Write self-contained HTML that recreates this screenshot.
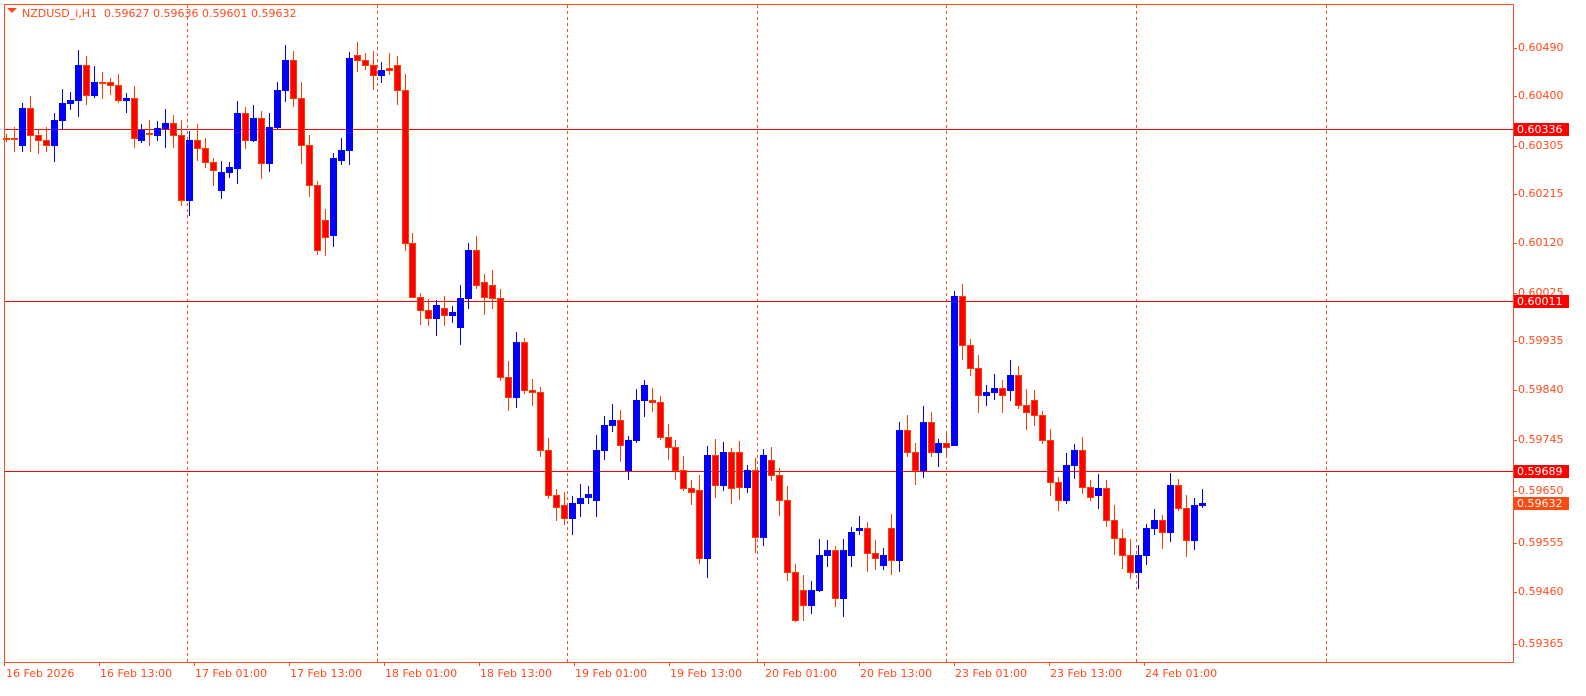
<!DOCTYPE html>
<html><head><meta charset="utf-8"><style>
body{margin:0;width:1586px;height:696px;background:#fff;overflow:hidden;position:relative;font-family:"DejaVu Sans","Liberation Sans",sans-serif;font-size:11px;color:#ff4a1c}
.t{position:absolute;white-space:nowrap}
.lab{position:absolute;left:1514px;width:52px;height:13px;line-height:13px;color:#fff;padding-left:3px;font-size:11px}
</style></head><body>
<svg id="s" width="1586" height="696" style="position:absolute;left:0;top:0"></svg>
<div class="t" style="left:22px;top:7px;font-size:11px">NZDUSD_i,H1&nbsp; 0.59627 0.59636 0.59601 0.59632</div>
<div id="ax"></div>
<div class="lab" style="top:123px;background:#ff0000">0.60336</div>
<div class="lab" style="top:295px;background:#ff0000">0.60011</div>
<div class="lab" style="top:465px;background:#ff0000">0.59689</div>
<div class="lab" style="top:497px;background:#ff4a10">0.59632</div>
<script>
var s=document.getElementById('s'),h='';
h+='<polygon points="7,8 17,8 12,13" fill="#ff4a1c"/>';
h+='<rect x="4.5" y="4.5" width="1509" height="658" fill="none" stroke="#ff4a1c"/>';
[187,377,567,757,946,1136,1326].forEach(function(x){h+='<line x1="'+(x+.5)+'" y1="5" x2="'+(x+.5)+'" y2="662" stroke="#ff4a1c" stroke-dasharray="3,3"/>';});
[129,301,471].forEach(function(y){h+='<line x1="5" y1="'+(y+.5)+'" x2="1513" y2="'+(y+.5)+'" stroke="#ff0000"/>';});
var ys=[[48,'0.60490'],[96,'0.60400'],[146,'0.60305'],[194,'0.60215'],[243,'0.60120'],[293,'0.60025'],[341,'0.59935'],[390,'0.59840'],[440,'0.59745'],[491,'0.59650'],[543,'0.59555'],[592,'0.59460'],[644,'0.59365']];
var ax='';
ys.forEach(function(a){h+='<line x1="1513" y1="'+(a[0]+.5)+'" x2="1517" y2="'+(a[0]+.5)+'" stroke="#ff4a1c"/>';ax+='<div class="t" style="left:1518px;top:'+(a[0]-7)+'px">'+a[1]+'</div>';});
var dl=['16 Feb 2026','16 Feb 13:00','17 Feb 01:00','17 Feb 13:00','18 Feb 01:00','18 Feb 13:00','19 Feb 01:00','19 Feb 13:00','20 Feb 01:00','20 Feb 13:00','23 Feb 01:00','23 Feb 13:00','24 Feb 01:00'];
dl.forEach(function(t,i){var x=i==0?6:5+i*95;ax+='<div class="t" style="left:'+x+'px;top:667px">'+t+'</div>';h+='<line x1="'+(4+i*95+.5)+'" y1="662" x2="'+(4+i*95+.5)+'" y2="666" stroke="#ff4a1c"/>';});
document.getElementById('ax').innerHTML=ax;
var c=[[138,138],[138,138],[145,108],[108,135],[135,140],[140,145],[145,120],[120,103],[103,100],[100,65],[65,95],[95,82],[82,82],[82,85],[85,100],[100,98],[98,138],[140,130],[133,133],[135,128],[128,123],[123,135],[135,200],[200,140],[140,148],[148,162],[162,170],[190,172],[172,167],[168,113],[113,140],[140,118],[118,163],[163,127],[127,90],[90,60],[60,98],[98,145],[145,185],[185,250],[220,237],[235,158],[160,150],[150,58],[55,60],[60,65],[65,75],[75,70],[68,70],[65,90],[90,243],[243,297],[297,310],[310,318],[318,305],[308,315],[315,312],[327,298],[298,250],[250,285],[282,297],[285,298],[298,377],[377,397],[397,342],[342,390],[390,392],[392,450],[450,495],[495,507],[505,518],[518,503],[503,498],[497,494],[500,450],[450,425],[425,420],[420,445],[470,440],[440,400],[400,385],[400,402],[402,437],[437,447],[447,470],[470,488],[488,492],[490,558],[558,455],[455,485],[485,452],[452,488],[452,487],[487,470],[470,537],[537,455],[460,475],[475,500],[500,572],[572,620],[590,605],[605,590],[590,555],[555,550],[550,598],[598,550],[555,532],[530,528],[528,553],[553,558],[565,555],[528,560],[560,430],[430,452],[452,470],[470,422],[422,452],[452,443],[443,447],[445,296],[296,345],[345,368],[368,395],[395,392],[392,388],[388,395],[390,375],[375,405],[405,412],[400,415],[415,440],[440,482],[482,500],[500,465],[465,450],[450,487],[487,497],[495,488],[488,520],[520,538],[538,555],[555,572],[572,555],[555,528],[528,520],[520,532],[532,485],[485,508],[508,540],[540,505],[505,503]];
c.forEach(function(k,i){var x=Math.round(6+i*7.97),o=k[0],cl=k[1],up=cl<o,t=Math.min(o,cl),b=Math.max(o,cl);
var hi=t-4-((i*7)%13),lo=b+4-((i*5)%4)+((i*11)%17);
var col=up?'#0000ff':'#ff3d00';
h+='<line x1="'+(x+.5)+'" y1="'+hi+'" x2="'+(x+.5)+'" y2="'+lo+'" stroke="'+col+'"/>';
if(b-t<1)h+='<rect x="'+(x-3)+'" y="'+t+'" width="7" height="2" fill="'+col+'"/>';
else h+='<rect x="'+(x-2.5)+'" y="'+(t+.5)+'" width="6" height="'+(b-t)+'" fill="'+(up?'#0000ff':'#ff0000')+'" stroke="'+col+'"/>';});
s.innerHTML=h;
</script>
</body></html>
